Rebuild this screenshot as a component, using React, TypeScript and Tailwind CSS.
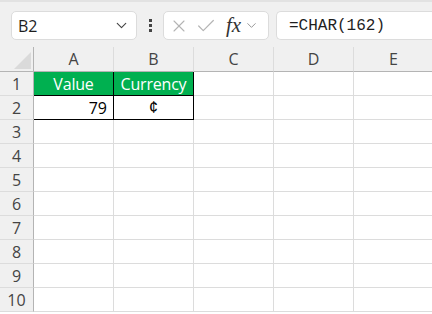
import { ChevronDown, X, Check } from 'lucide-react';

const cols = ['A', 'B', 'C', 'D', 'E'];
const rows = [1, 2, 3, 4, 5, 6, 7, 8, 9, 10];

const cellFont = { fontFamily: '"Open Sans", "Noto Sans", sans-serif' };

export default function App() {
  return (
    <div className="w-[432px] h-[314px] overflow-hidden bg-white" style={cellFont}>
      {/* formula bar */}
      <div className="h-[47px] bg-[#f0f0f0] border-t-2 border-[#e2e2e2] flex items-start pt-[9px]">
        <div className="ml-[11px] w-[126px] h-[29px] bg-white border border-[#dcdcdc] rounded-[5px] flex items-center pl-[6px] pr-[6px]">
          <span className="text-[16px] text-[#1e1e1e] flex-1">B2</span>
          <ChevronDown className="w-[17px] h-[17px] text-[#444]" strokeWidth={1.6} />
        </div>
        <div className="w-[26px] h-[29px] flex flex-col items-center justify-center gap-[2px]">
          <div className="w-[3px] h-[3px] bg-[#444]" />
          <div className="w-[3px] h-[3px] bg-[#444]" />
          <div className="w-[3px] h-[3px] bg-[#444]" />
        </div>
        <div className="w-[106px] h-[29px] bg-white border border-[#dcdcdc] rounded-[5px] flex items-center pl-[5px]">
          <X className="w-[20px] h-[20px] text-[#b4b4b4]" strokeWidth={1.3} />
          <Check className="w-[22px] h-[22px] text-[#b4b4b4] ml-[6px]" strokeWidth={1.3} />
          <span className="ml-[9px] text-[21px] italic text-[#333] leading-none" style={{ fontFamily: '"Liberation Serif", serif' }}>
            fx
          </span>
          <ChevronDown className="w-[15px] h-[15px] text-[#999] ml-[3px]" strokeWidth={1.6} />
        </div>
        <div className="ml-[7px] flex-1 h-[29px] bg-white border border-[#dcdcdc] border-r-0 rounded-l-[5px] flex items-center pl-[12px]">
          <span className="text-[16px] text-[#1e1e1e]" style={{ fontFamily: '"Liberation Mono", monospace' }}>
            =CHAR(162)
          </span>
        </div>
      </div>

      {/* grid */}
      <div className="grid grid-cols-[34px_80px_80px_80px_80px_80px] grid-rows-[25px_repeat(10,24px)]">
        <div className="bg-[#f0f0f0] border-r border-b border-[#b4b4b4] relative">
          <div className="absolute right-[2px] bottom-[2px] w-0 h-0 border-l-[17px] border-l-transparent border-b-[17px] border-b-[#dadada]" />
        </div>
        {cols.map((c) => (
          <div
            key={c}
            className="bg-[#f0f0f0] border-r border-b border-r-[#dcdcdc] border-b-[#b4b4b4] flex items-center justify-center text-[16px] text-[#444]"
          >
            {c}
          </div>
        ))}
        {rows.map((r) => (
          <Row key={r} r={r} />
        ))}
      </div>
    </div>
  );
}

function Row({ r }: { r: number }) {
  return (
    <>
      <div className="bg-[#f0f0f0] border-r border-b border-r-[#b4b4b4] border-b-[#dcdcdc] flex items-center justify-center text-[16px] text-[#444]">
        {r}
      </div>
      {cols.map((c) => {
        if (r === 1 && (c === 'A' || c === 'B')) {
          return (
            <div
              key={c}
              className="bg-[#00b050] border-r border-b border-black flex items-center justify-center text-[16px] text-white tracking-[-0.2px]"
            >
              {c === 'A' ? 'Value' : 'Currency'}
            </div>
          );
        }
        if (r === 2 && c === 'A') {
          return (
            <div key={c} className="border-r border-b border-black flex items-center justify-end pr-[6px] text-[16px] text-black">
              79
            </div>
          );
        }
        if (r === 2 && c === 'B') {
          return (
            <div key={c} className="border-r border-b border-black flex items-center justify-center text-[16px] text-black" style={{ fontFamily: '"Liberation Sans", sans-serif' }}>
              ¢
            </div>
          );
        }
        return <div key={c} className="border-r border-b border-[#dcdcdc]" />;
      })}
    </>
  );
}
